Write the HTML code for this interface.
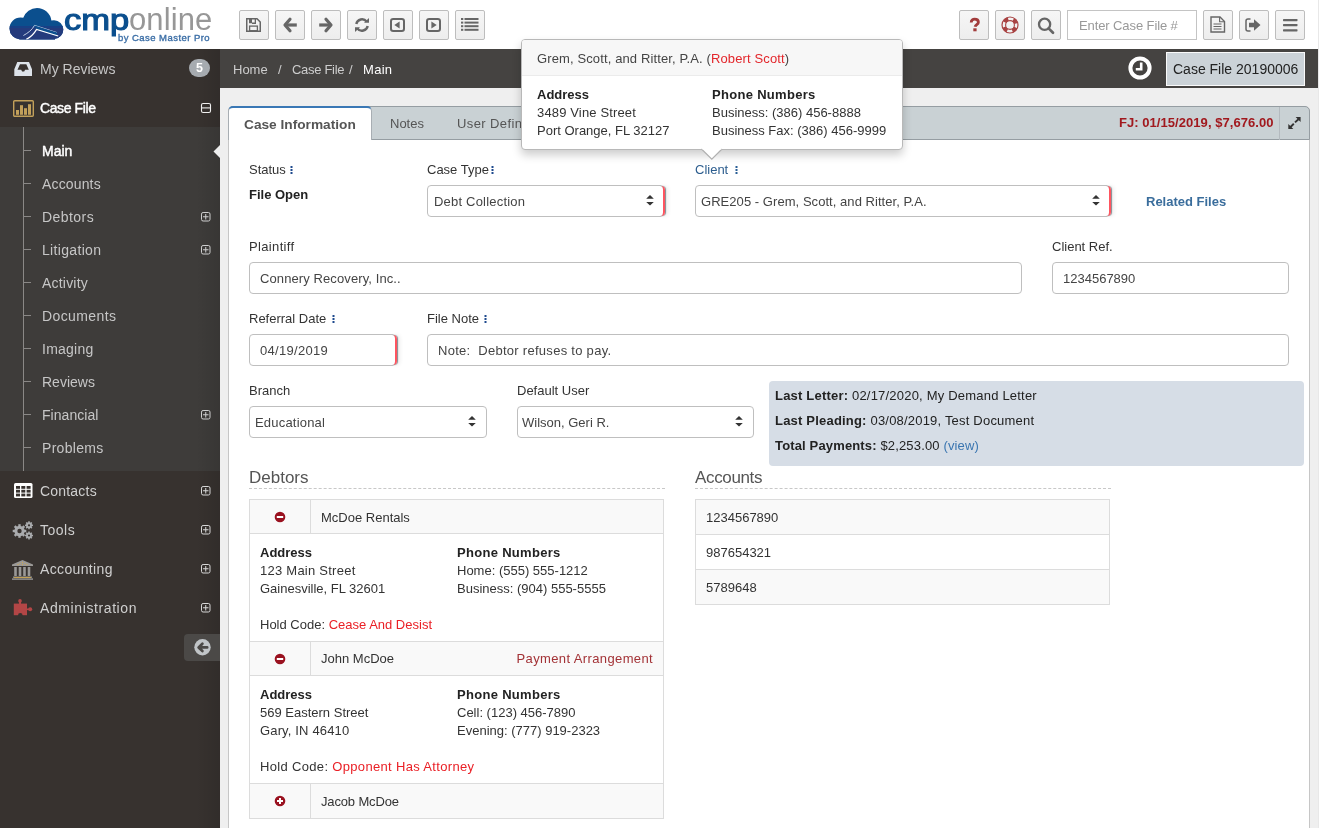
<!DOCTYPE html>
<html><head><meta charset="utf-8">
<style>
*{box-sizing:border-box;margin:0;padding:0}
html,body{width:1319px;height:828px;overflow:hidden;background:#fff;font-family:"Liberation Sans",sans-serif;font-size:13px;color:#333}
body{will-change:transform}
.a{position:absolute}
svg.a{overflow:visible}
.t{position:absolute;white-space:nowrap;line-height:18px}
.tb{position:absolute;top:10px;width:30px;height:30px;border:1px solid #bdbdbd;border-radius:2px;background:linear-gradient(#f6f6f6,#ededed)}
.s14{font-size:14px}
.sub{color:#c6c6c6;font-size:14px}
.inp{position:absolute;height:32px;border:1px solid #bfbfbf;border-radius:4px;background:#fff}
.rq{position:absolute;width:6px;height:30px;border-right:2.2px solid #ff5560;border-radius:0 4px 4px 0;box-shadow:1px 0 1px rgba(40,55,65,0.55),3px 0 4px rgba(0,0,0,0.07)}
.lbl{color:#333}
.b{font-weight:bold}
.tick{position:absolute;left:23px;width:8px;height:1px;background:#8a8886}
</style></head><body>

<!-- ===== HEADER ===== -->
<div class="a" style="left:1318px;top:0;width:1px;height:828px;background:#e8e8e8"></div>

<!-- logo -->
<svg class="a" style="left:0;top:0" width="70" height="48" viewBox="0 0 70 48">
  <defs><clipPath id="cl">
    <circle cx="20.5" cy="28.5" r="11"/>
    <circle cx="37" cy="22.5" r="14.5"/>
    <circle cx="54" cy="29.5" r="9.3"/>
    <rect x="20" y="26" width="35" height="13.6"/>
  </clipPath></defs>
  <g clip-path="url(#cl)">
    <rect x="0" y="0" width="70" height="48" fill="#0b4f8e"/>
    <rect x="0" y="27.5" width="70" height="20" fill="#243b7d"/>
    <rect x="0" y="26" width="70" height="1.5" fill="#183f86"/>
    <path d="M23.4,35.5 C28,33 32,30 34.5,25.4 L57,32.6" fill="none" stroke="#d4e0ee" stroke-width="0.9"/>
    <path d="M34.5,25.4 L57,32.6 L57,36 L36.6,29.4 Z" fill="#0b4f8e"/>
    <path d="M26.3,39.4 C31,37 34.5,33 36.6,29.4 L58.2,36" fill="none" stroke="#fff" stroke-width="1.2"/>
  </g>
</svg>
<div class="a" style="left:64px;top:4.5px;font-size:29px;line-height:31px;color:#0b4f8e;-webkit-text-stroke:1.1px #0b4f8e;transform:scaleX(1.19);transform-origin:0 0">cmp</div>
<div class="a" style="left:129px;top:4px;font-size:31px;line-height:31px;color:#979797;letter-spacing:0.1px">online</div>
<div class="a" style="left:118px;top:32.5px;font-size:9.5px;line-height:9px;color:#3b6ea6;-webkit-text-stroke:0.35px #3b6ea6;letter-spacing:0.45px">by Case Master Pro</div>

<!-- toolbar left -->
<div class="tb" style="left:239px"></div>
<div class="tb" style="left:275px"></div>
<div class="tb" style="left:311px"></div>
<div class="tb" style="left:347px"></div>
<div class="tb" style="left:383px"></div>
<div class="tb" style="left:419px"></div>
<div class="tb" style="left:455px"></div>
<!-- save -->
<svg class="a" style="left:246px;top:18px" width="15" height="14" viewBox="0 0 15 14">
  <path d="M0.75,0.75 H11 L14.25,4 V13.25 H0.75 Z" fill="none" stroke="#666" stroke-width="1.5"/>
  <rect x="3" y="0.75" width="3" height="4.5" fill="#666"/>
  <path d="M6,5.25 H9.35 V0.75" fill="none" stroke="#666" stroke-width="1.3"/>
  <rect x="3.6" y="8.1" width="7.8" height="4.6" fill="none" stroke="#666" stroke-width="1.3"/>
</svg>
<!-- arrow left -->
<svg class="a" style="left:283px;top:17px" width="14" height="16" viewBox="0 0 14 16">
  <polyline points="7,2.2 2,8 7,13.8" fill="none" stroke="#666" stroke-width="3.2" stroke-linecap="round" stroke-linejoin="round"/>
  <line x1="2.5" y1="8" x2="13.8" y2="8" stroke="#666" stroke-width="3.2"/>
</svg>
<!-- arrow right -->
<svg class="a" style="left:319px;top:17px" width="14" height="16" viewBox="0 0 14 16">
  <polyline points="7,2.2 12,8 7,13.8" fill="none" stroke="#666" stroke-width="3.2" stroke-linecap="round" stroke-linejoin="round"/>
  <line x1="0.2" y1="8" x2="11.5" y2="8" stroke="#666" stroke-width="3.2"/>
</svg>
<!-- refresh -->
<svg class="a" style="left:354px;top:18px" width="16" height="14" viewBox="0 0 16 14">
  <path d="M2.3,6 A5.8,5.8 0 0 1 12.6,3.6" fill="none" stroke="#666" stroke-width="2.4"/>
  <path d="M10,4.8 L15,4.8 L15,0 Z" fill="#666"/>
  <path d="M13.7,8 A5.8,5.8 0 0 1 3.4,10.4" fill="none" stroke="#666" stroke-width="2.4"/>
  <path d="M6,9.2 L1,9.2 L1,14 Z" fill="#666"/>
</svg>
<!-- step back -->
<svg class="a" style="left:390px;top:18px" width="15" height="14" viewBox="0 0 15 14">
  <rect x="1" y="1" width="13" height="12" rx="2.2" fill="none" stroke="#666" stroke-width="2"/>
  <path d="M4.3,7 L9.6,3.4 V10.6 Z" fill="#666"/>
</svg>
<!-- step fwd -->
<svg class="a" style="left:426px;top:18px" width="15" height="14" viewBox="0 0 15 14">
  <rect x="1" y="1" width="13" height="12" rx="2.2" fill="none" stroke="#666" stroke-width="2"/>
  <path d="M10.7,7 L5.4,3.4 V10.6 Z" fill="#666"/>
</svg>
<!-- list -->
<svg class="a" style="left:461px;top:18px" width="18" height="13" viewBox="0 0 18 13">
  <g fill="#666">
  <rect x="0" y="0" width="2.3" height="2"/><rect x="3.5" y="0" width="14" height="2"/>
  <rect x="0" y="3.6" width="2.3" height="2"/><rect x="3.5" y="3.6" width="14" height="2"/>
  <rect x="0" y="7.2" width="2.3" height="2"/><rect x="3.5" y="7.2" width="14" height="2"/>
  <rect x="0" y="10.8" width="2.3" height="2"/><rect x="3.5" y="10.8" width="14" height="2"/>
  </g>
</svg>

<!-- toolbar right -->
<div class="tb" style="left:959px"></div>
<div class="tb" style="left:995px"></div>
<div class="tb" style="left:1031px"></div>
<div class="a" style="left:1067px;top:10px;width:130px;height:30px;border:1px solid #c4c4c4;background:#fff"></div>
<div class="t" style="left:1079px;top:17px;color:#999;letter-spacing:-0.1px">Enter Case File #</div>
<div class="tb" style="left:1203px"></div>
<div class="tb" style="left:1239px"></div>
<div class="tb" style="left:1275px"></div>
<!-- ? -->
<svg class="a" style="left:969px;top:18px" width="12" height="14" viewBox="0 0 12 14">
  <path d="M2.2,4.6 C2.2,1.6 4,1.2 5.6,1.2 C7.8,1.2 9.4,2.4 9.4,4.2 C9.4,6.6 6.5,6.6 6.1,8.8" fill="none" stroke="#a23c3c" stroke-width="2.8"/>
  <rect x="4.3" y="10.3" width="3.3" height="3" fill="#a23c3c"/>
</svg>
<!-- lifebuoy -->
<svg class="a" style="left:1001px;top:16px" width="18" height="18" viewBox="0 0 18 18">
  <circle cx="9" cy="9" r="6.2" fill="none" stroke="#a84242" stroke-width="3.6" stroke-dasharray="4.5 5.24" stroke-dashoffset="-2.62"/>
  <circle cx="9" cy="9" r="8" fill="none" stroke="#a84242" stroke-width="1.2"/>
  <circle cx="9" cy="9" r="4.4" fill="none" stroke="#a84242" stroke-width="1.1"/>
</svg>
<!-- search -->
<svg class="a" style="left:1037px;top:17px" width="18" height="18" viewBox="0 0 18 18">
  <circle cx="7.6" cy="7.3" r="5.6" fill="none" stroke="#666" stroke-width="2.3"/>
  <line x1="11.6" y1="11.4" x2="16" y2="15.8" stroke="#666" stroke-width="2.7" stroke-linecap="round"/>
</svg>
<!-- doc -->
<svg class="a" style="left:1210px;top:16px" width="16" height="17" viewBox="0 0 16 17">
  <path d="M1,1 H10 L14.5,5.5 V16 H1 Z" fill="none" stroke="#666" stroke-width="1.4"/>
  <path d="M9.6,1 V5.8 H14.5" fill="none" stroke="#666" stroke-width="1.1"/>
  <g stroke="#666" stroke-width="1"><line x1="3.5" y1="8" x2="11.5" y2="8"/><line x1="3.5" y1="10.5" x2="11.5" y2="10.5"/><line x1="3.5" y1="13" x2="11.5" y2="13"/></g>
</svg>
<!-- sign out -->
<svg class="a" style="left:1245px;top:18px" width="17" height="14" viewBox="0 0 17 14">
  <path d="M5.5,1 H3 Q1,1 1,3 V11 Q1,13 3,13 H5.5" fill="none" stroke="#666" stroke-width="1.5"/>
  <path d="M4,4.8 H9 V1.2 L15.5,7 L9,12.8 V9.2 H4 Z" fill="#666"/>
</svg>
<!-- hamburger -->
<svg class="a" style="left:1283px;top:19px" width="15" height="13" viewBox="0 0 15 13">
  <g fill="#666"><rect x="0" y="0" width="14.5" height="2.2" rx="0.6"/><rect x="0" y="5" width="14.5" height="2.2" rx="0.6"/><rect x="0" y="10.2" width="14.5" height="2.2" rx="0.6"/></g>
</svg>

<!-- ===== SIDEBAR ===== -->
<div class="a" style="left:0;top:49px;width:220px;height:779px;background:#37322f"></div>
<div class="a" style="left:0;top:127px;width:220px;height:344px;background:#3e3c3a"></div>
<div class="a" style="left:196px;top:49px;width:24px;height:779px;background:linear-gradient(90deg,rgba(0,0,0,0),rgba(0,0,0,0.10))"></div>

<!-- My Reviews -->
<svg class="a" style="left:14px;top:62px" width="18" height="14" viewBox="0 0 18 14">
  <path d="M3.3,0 H15 L18,7.3 V14 H0.3 V7.3 Z M6,2.3 L3.5,7.7 H7.2 L8.1,9.6 H10.2 L11.1,7.7 H14.8 L12.3,2.3 Z" fill="#dde3ea" fill-rule="evenodd"/>
</svg>
<div class="t sub" style="left:40px;top:60px;color:#c6c6c6">My Reviews</div>
<div class="a" style="left:189px;top:59px;width:21px;height:18px;border-radius:9px;background:#a6abb0"></div>
<div class="a" style="left:189px;top:59px;width:21px;height:18px;font-size:12.5px;line-height:18px;text-align:center;font-weight:bold;color:#fff">5</div>

<!-- Case File -->
<svg class="a" style="left:13px;top:100px" width="21" height="17" viewBox="0 0 21 17">
  <rect x="0.7" y="0.7" width="19.6" height="15.6" rx="1" fill="none" stroke="#c2a05a" stroke-width="1.4"/>
  <g fill="#c2a05a"><rect x="3" y="10" width="3" height="4.8"/><rect x="7" y="5.2" width="3" height="9.6"/><rect x="11" y="8.2" width="3" height="6.6"/><rect x="15" y="4.2" width="3" height="10.6"/></g>
</svg>
<div class="t" style="left:40px;top:99px;font-size:14px;color:#fff;-webkit-text-stroke:0.45px #fff;letter-spacing:-0.4px">Case File</div>
<svg class="a" style="left:201px;top:103px" width="10" height="10" viewBox="0 0 10 10">
  <rect x="0.5" y="0.5" width="9" height="9" rx="1.6" fill="none" stroke="#f0f0f0" stroke-width="1.1"/>
  <line x1="0.5" y1="4.9" x2="9.5" y2="4.9" stroke="#f0f0f0" stroke-width="1.1"/>
</svg>

<!-- submenu -->
<div class="a" style="left:23px;top:127px;width:1px;height:344px;background:#8a8886"></div>
<div class="tick" style="top:150px"></div>
<div class="tick" style="top:183px"></div>
<div class="tick" style="top:216px"></div>
<div class="tick" style="top:249px"></div>
<div class="tick" style="top:282px"></div>
<div class="tick" style="top:315px"></div>
<div class="tick" style="top:348px"></div>
<div class="tick" style="top:381px"></div>
<div class="tick" style="top:414px"></div>
<div class="tick" style="top:447px"></div>
<div class="t" style="left:42px;top:142px;font-size:14px;color:#fff;-webkit-text-stroke:0.45px #fff;letter-spacing:0px">Main</div>
<div class="t sub" style="left:42px;top:175px;letter-spacing:0.15px">Accounts</div>
<div class="t sub" style="left:42px;top:208px;letter-spacing:0.45px">Debtors</div>
<div class="t sub" style="left:42px;top:241px;letter-spacing:0.33px">Litigation</div>
<div class="t sub" style="left:42px;top:274px;letter-spacing:0.2px">Activity</div>
<div class="t sub" style="left:42px;top:307px;letter-spacing:0.4px">Documents</div>
<div class="t sub" style="left:42px;top:340px;letter-spacing:0.25px">Imaging</div>
<div class="t sub" style="left:42px;top:373px">Reviews</div>
<div class="t sub" style="left:42px;top:406px;letter-spacing:0.05px">Financial</div>
<div class="t sub" style="left:42px;top:439px;letter-spacing:0.3px">Problems</div>
<!-- active arrow -->
<svg class="a" style="left:213px;top:145px" width="7" height="13" viewBox="0 0 7 13"><path d="M7,0 L0.5,6.5 L7,13 Z" fill="#eeeeee"/></svg>

<!-- plus icons -->
<svg class="a" style="left:201px;top:212px" width="10" height="10" viewBox="0 0 10 10"><rect x="0.5" y="0.5" width="8.5" height="8.5" rx="1.6" fill="none" stroke="#cfcfcf" stroke-width="1"/><path d="M4.75,2 V7.5 M2,4.75 H7.5" stroke="#cfcfcf" stroke-width="1"/></svg>
<svg class="a" style="left:201px;top:245px" width="10" height="10" viewBox="0 0 10 10"><rect x="0.5" y="0.5" width="8.5" height="8.5" rx="1.6" fill="none" stroke="#cfcfcf" stroke-width="1"/><path d="M4.75,2 V7.5 M2,4.75 H7.5" stroke="#cfcfcf" stroke-width="1"/></svg>
<svg class="a" style="left:201px;top:410px" width="10" height="10" viewBox="0 0 10 10"><rect x="0.5" y="0.5" width="8.5" height="8.5" rx="1.6" fill="none" stroke="#cfcfcf" stroke-width="1"/><path d="M4.75,2 V7.5 M2,4.75 H7.5" stroke="#cfcfcf" stroke-width="1"/></svg>
<svg class="a" style="left:201px;top:486px" width="10" height="10" viewBox="0 0 10 10"><rect x="0.5" y="0.5" width="8.5" height="8.5" rx="1.6" fill="none" stroke="#d8d8d8" stroke-width="1"/><path d="M4.75,2 V7.5 M2,4.75 H7.5" stroke="#d8d8d8" stroke-width="1"/></svg>
<svg class="a" style="left:201px;top:525px" width="10" height="10" viewBox="0 0 10 10"><rect x="0.5" y="0.5" width="8.5" height="8.5" rx="1.6" fill="none" stroke="#d8d8d8" stroke-width="1"/><path d="M4.75,2 V7.5 M2,4.75 H7.5" stroke="#d8d8d8" stroke-width="1"/></svg>
<svg class="a" style="left:201px;top:564px" width="10" height="10" viewBox="0 0 10 10"><rect x="0.5" y="0.5" width="8.5" height="8.5" rx="1.6" fill="none" stroke="#d8d8d8" stroke-width="1"/><path d="M4.75,2 V7.5 M2,4.75 H7.5" stroke="#d8d8d8" stroke-width="1"/></svg>
<svg class="a" style="left:201px;top:603px" width="10" height="10" viewBox="0 0 10 10"><rect x="0.5" y="0.5" width="8.5" height="8.5" rx="1.6" fill="none" stroke="#d8d8d8" stroke-width="1"/><path d="M4.75,2 V7.5 M2,4.75 H7.5" stroke="#d8d8d8" stroke-width="1"/></svg>

<!-- Contacts -->
<svg class="a" style="left:14px;top:483px" width="19" height="15" viewBox="0 0 19 15">
  <rect x="0" y="0" width="18.5" height="15" rx="1.5" fill="#fff"/>
  <g fill="#37322f">
  <rect x="2" y="3" width="4" height="2.8"/><rect x="7.3" y="3" width="4" height="2.8"/><rect x="12.6" y="3" width="4" height="2.8"/>
  <rect x="2" y="6.8" width="4" height="2.8"/><rect x="7.3" y="6.8" width="4" height="2.8"/><rect x="12.6" y="6.8" width="4" height="2.8"/>
  <rect x="2" y="10.6" width="4" height="2.8"/><rect x="7.3" y="10.6" width="4" height="2.8"/><rect x="12.6" y="10.6" width="4" height="2.8"/>
  </g>
</svg>
<div class="t sub" style="left:40px;top:482px;color:#cfcfcf;letter-spacing:0.2px">Contacts</div>
<!-- Tools gears -->
<svg class="a" style="left:12px;top:521px" width="22" height="19" viewBox="0 0 22 19">
  <g fill="#a9abad">
    <circle cx="7.5" cy="10" r="5.2"/>
    <g stroke="#a9abad" stroke-width="2.4">
      <line x1="7.5" y1="3.2" x2="7.5" y2="16.8"/><line x1="0.7" y1="10" x2="14.3" y2="10"/>
      <line x1="2.7" y1="5.2" x2="12.3" y2="14.8"/><line x1="2.7" y1="14.8" x2="12.3" y2="5.2"/>
    </g>
    <circle cx="17" cy="4.3" r="3"/>
    <g stroke="#a9abad" stroke-width="1.5"><line x1="17" y1="0.3" x2="17" y2="8.3"/><line x1="13" y1="4.3" x2="21" y2="4.3"/><line x1="14.2" y1="1.5" x2="19.8" y2="7.1"/><line x1="14.2" y1="7.1" x2="19.8" y2="1.5"/></g>
    <circle cx="17" cy="14.5" r="3"/>
    <g stroke="#a9abad" stroke-width="1.5"><line x1="17" y1="10.5" x2="17" y2="18.5"/><line x1="13" y1="14.5" x2="21" y2="14.5"/><line x1="14.2" y1="11.7" x2="19.8" y2="17.3"/><line x1="14.2" y1="17.3" x2="19.8" y2="11.7"/></g>
  </g>
  <circle cx="7.5" cy="10" r="2.2" fill="#37322f"/>
  <circle cx="17" cy="4.3" r="1.1" fill="#37322f"/>
  <circle cx="17" cy="14.5" r="1.1" fill="#37322f"/>
</svg>
<div class="t sub" style="left:40px;top:521px;color:#cfcfcf;letter-spacing:0.5px">Tools</div>
<!-- Accounting bank -->
<svg class="a" style="left:12px;top:560px" width="22" height="20" viewBox="0 0 22 20">
  <path d="M10.5,0 L21,4.5 V6 H0 V4.5 Z" fill="#9a9896"/>
  <g fill="#d4aa4a"><circle cx="8" cy="3.5" r="0.6"/><circle cx="10.5" cy="2.5" r="0.6"/><circle cx="13" cy="3.5" r="0.6"/><circle cx="6" cy="4.6" r="0.6"/><circle cx="15" cy="4.6" r="0.6"/><circle cx="10.5" cy="4.6" r="0.6"/></g>
  <g fill="#9a9896"><rect x="2.2" y="7" width="2.6" height="9"/><rect x="6.7" y="7" width="2.6" height="9"/><rect x="11.2" y="7" width="2.6" height="9"/><rect x="15.7" y="7" width="2.6" height="9"/><rect x="1" y="16.5" width="19" height="1.3"/><rect x="0" y="18.4" width="21" height="1.4"/></g>
  <g fill="#d4aa4a"><rect x="2" y="17" width="17" height="0.8"/></g>
</svg>
<div class="t sub" style="left:40px;top:560px;color:#cfcfcf;letter-spacing:0.35px">Accounting</div>
<!-- Administration puzzle -->
<svg class="a" style="left:13px;top:599px" width="20" height="17" viewBox="0 0 20 17">
  <g fill="#b34646">
    <rect x="0.8" y="4.6" width="13.2" height="11.6"/>
    <circle cx="7" cy="1.9" r="1.8"/><rect x="6" y="2" width="2" height="3"/>
    <circle cx="17.2" cy="10.3" r="2"/><rect x="13.5" y="9.5" width="2.5" height="1.6"/>
  </g>
  <circle cx="7.3" cy="16.4" r="2.3" fill="#37322f"/>
</svg>
<div class="t sub" style="left:40px;top:599px;color:#cfcfcf;letter-spacing:0.6px">Administration</div>

<!-- collapse button -->
<div class="a" style="left:184px;top:634px;width:36px;height:27px;background:#4b4947;border-radius:4px 0 0 4px"></div>
<svg class="a" style="left:193.5px;top:638.5px" width="17" height="17" viewBox="0 0 17 17">
  <circle cx="8.5" cy="8.3" r="8.2" fill="#c1c5c8"/>
  <path d="M8.4,4.8 L4.6,8.4 L8.4,12 M5.2,8.4 H13.2" fill="none" stroke="#4b4947" stroke-width="2.7" stroke-linecap="round" stroke-linejoin="round"/>
</svg>

<!-- ===== TOP BAR ===== -->
<div class="a" style="left:220px;top:49px;width:1098px;height:39px;background:#454341"></div>
<div class="t" style="left:233px;top:60.5px;color:#cdcdcd">Home</div>
<div class="t" style="left:278px;top:60.5px;color:#cdcdcd">/</div>
<div class="t" style="left:292px;top:60.5px;color:#cdcdcd;letter-spacing:-0.3px">Case File</div>
<div class="t" style="left:349px;top:60.5px;color:#cdcdcd">/</div>
<div class="t" style="left:363px;top:60.5px;color:#fff;letter-spacing:0.3px">Main</div>
<svg class="a" style="left:1128px;top:56px" width="24" height="24" viewBox="0 0 24 24">
  <circle cx="12" cy="12" r="9.6" fill="none" stroke="#fff" stroke-width="4"/>
  <path d="M13.2,6.6 V13.3 H7.8" fill="none" stroke="#fff" stroke-width="2.6"/>
</svg>
<div class="a" style="left:1166px;top:52px;width:139px;height:34px;background:#cbd2d7;border:1.5px solid #fafafa"></div>
<div class="t" style="left:1173px;top:60px;font-size:14px;color:#222">Case File 20190006</div>

<!-- ===== CONTENT ===== -->
<div class="a" style="left:220px;top:88px;width:1098px;height:740px;background:#efefef"></div>
<div class="a" style="left:228px;top:106px;width:1082px;height:740px;background:#fff;border:1px solid #c6c6c6;border-radius:5px 5px 0 0"></div>
<div class="a" style="left:228px;top:106px;width:1082px;height:34px;background:#c9d1d4;border:1px solid #959da2;border-radius:5px 5px 0 0"></div>
<!-- active tab -->
<div class="a" style="left:228px;top:106px;width:144px;height:34px;background:#fff;border-top:2px solid #3a78b5;border-left:1px solid #a8aeb3;border-right:1px solid #a8aeb3;border-radius:5px 5px 0 0"></div>
<div class="t b" style="left:244px;top:116px;font-size:13.7px;color:#555">Case Information</div>
<div class="t" style="left:390px;top:115px;color:#555">Notes</div>
<div class="t" style="left:457px;top:115px;color:#555;letter-spacing:0.4px">User Defined</div>
<div class="t b" style="left:1119px;top:113.5px;color:#a1191e;letter-spacing:0.05px">FJ: 01/15/2019, $7,676.00</div>
<div class="a" style="left:1279px;top:107px;width:1px;height:33px;background:#b4babf"></div>
<svg class="a" style="left:1287px;top:116px" width="15" height="15" viewBox="0 0 15 15">
  <path d="M8.6,1.1 H13.6 V6.1 Z M1.3,8.1 V13.1 H6.3 Z" fill="#333"/>
  <path d="M12,2.7 L8,6.4 M3,11.5 L6.8,7.8" stroke="#333" stroke-width="1.9"/>
</svg>

<!-- row 1 -->
<div class="t lbl" style="left:249px;top:161px">Status</div>
<svg class="a" style="left:290px;top:165px" width="3" height="10" viewBox="0 0 3 10"><g fill="#1f4a8e"><rect x="0.5" y="1" width="2" height="2"/><rect x="0.5" y="4" width="2" height="2"/><rect x="0.5" y="7" width="2" height="2"/></g></svg>
<div class="t b" style="left:249px;top:186px;color:#222">File Open</div>
<div class="t lbl" style="left:427px;top:161px">Case Type</div>
<svg class="a" style="left:491px;top:165px" width="3" height="10" viewBox="0 0 3 10"><g fill="#1f4a8e"><rect x="0.5" y="1" width="2" height="2"/><rect x="0.5" y="4" width="2" height="2"/><rect x="0.5" y="7" width="2" height="2"/></g></svg>
<div class="inp" style="left:427px;top:185px;width:237px;height:32px"></div><div class="rq" style="left:659px;top:186px"></div>
<div class="t" style="left:434px;top:193px;color:#444;letter-spacing:0.2px">Debt Collection</div>
<svg class="a" style="left:646px;top:195px" width="8" height="11" viewBox="0 0 8 11"><path d="M4,0 L7.8,3.8 H0.2 Z M4,10.6 L7.8,6.9 H0.2 Z" fill="#333"/></svg>
<div class="t" style="left:695px;top:161px;color:#2c5d8e">Client</div>
<svg class="a" style="left:735px;top:165px" width="3" height="10" viewBox="0 0 3 10"><g fill="#2a5f96"><rect x="0.5" y="1" width="2" height="2"/><rect x="0.5" y="4" width="2" height="2"/><rect x="0.5" y="7" width="2" height="2"/></g></svg>
<div class="inp" style="left:695px;top:185px;width:415px;height:32px"></div><div class="rq" style="left:1105px;top:186px"></div>
<div class="t" style="left:701px;top:193px;color:#444;letter-spacing:0.05px">GRE205 - Grem, Scott, and Ritter, P.A.</div>
<svg class="a" style="left:1092px;top:195px" width="8" height="11" viewBox="0 0 8 11"><path d="M4,0 L7.8,3.8 H0.2 Z M4,10.6 L7.8,6.9 H0.2 Z" fill="#333"/></svg>
<div class="t b" style="left:1146px;top:193px;color:#3a6d9c">Related Files</div>

<!-- row 2 -->
<div class="t lbl" style="left:249px;top:238px;letter-spacing:0.35px">Plaintiff</div>
<div class="inp" style="left:249px;top:262px;width:773px"></div>
<div class="t" style="left:260px;top:270px;color:#444;letter-spacing:0.1px">Connery Recovery, Inc..</div>
<div class="t lbl" style="left:1052px;top:238px">Client Ref.</div>
<div class="inp" style="left:1052px;top:262px;width:237px"></div>
<div class="t" style="left:1063px;top:270px;color:#444">1234567890</div>

<!-- row 3 -->
<div class="t lbl" style="left:249px;top:310px">Referral Date</div>
<svg class="a" style="left:332px;top:314px" width="3" height="10" viewBox="0 0 3 10"><g fill="#1f4a8e"><rect x="0.5" y="1" width="2" height="2"/><rect x="0.5" y="4" width="2" height="2"/><rect x="0.5" y="7" width="2" height="2"/></g></svg>
<div class="inp" style="left:249px;top:334px;width:147px"></div><div class="rq" style="left:391px;top:335px"></div>
<div class="t" style="left:260px;top:341.5px;color:#444;letter-spacing:0.3px">04/19/2019</div>
<div class="t lbl" style="left:427px;top:310px">File Note</div>
<svg class="a" style="left:484px;top:314px" width="3" height="10" viewBox="0 0 3 10"><g fill="#1f4a8e"><rect x="0.5" y="1" width="2" height="2"/><rect x="0.5" y="4" width="2" height="2"/><rect x="0.5" y="7" width="2" height="2"/></g></svg>
<div class="inp" style="left:427px;top:334px;width:862px"></div>
<div class="t" style="left:438px;top:341.5px;color:#444;letter-spacing:0.28px">Note:&nbsp; Debtor refuses to pay.</div>

<!-- row 4 -->
<div class="t lbl" style="left:249px;top:382px">Branch</div>
<div class="inp" style="left:249px;top:406px;width:238px"></div>
<div class="t" style="left:255px;top:414px;color:#444;letter-spacing:0.2px">Educational</div>
<svg class="a" style="left:468px;top:416px" width="8" height="11" viewBox="0 0 8 11"><path d="M4,0 L7.8,3.8 H0.2 Z M4,10.6 L7.8,6.9 H0.2 Z" fill="#333"/></svg>
<div class="t lbl" style="left:517px;top:382px">Default User</div>
<div class="inp" style="left:517px;top:406px;width:237px"></div>
<div class="t" style="left:522px;top:414px;color:#444">Wilson, Geri R.</div>
<svg class="a" style="left:735px;top:416px" width="8" height="11" viewBox="0 0 8 11"><path d="M4,0 L7.8,3.8 H0.2 Z M4,10.6 L7.8,6.9 H0.2 Z" fill="#333"/></svg>

<!-- info box -->
<div class="a" style="left:769px;top:381px;width:535px;height:85px;background:#d6dde6;border-radius:4px"></div>
<div class="t" style="left:775px;top:387px;color:#222;letter-spacing:0.2px"><b>Last Letter:</b> 02/17/2020, My Demand Letter</div>
<div class="t" style="left:775px;top:412px;color:#222;letter-spacing:0.2px"><b>Last Pleading:</b> 03/08/2019, Test Document</div>
<div class="t" style="left:775px;top:437px;color:#222;letter-spacing:0.15px"><b>Total Payments:</b> $2,253.00 <span style="color:#3a75b0">(view)</span></div>

<!-- Debtors -->
<div class="t" style="left:249px;top:468.5px;font-size:17px;color:#555">Debtors</div>
<div class="a" style="left:249px;top:488px;width:416px;height:0;border-top:1px dashed #c8c8c8"></div>
<div class="a" style="left:249px;top:499px;width:415px;height:320px;border:1px solid #dcdcdc;background:#fff"></div>
<div class="a" style="left:250px;top:500px;width:413px;height:34px;background:#f9f9f9;border-bottom:1px solid #dcdcdc"></div>
<div class="a" style="left:310px;top:500px;width:1px;height:34px;background:#dcdcdc"></div>
<svg class="a" style="left:274px;top:511px" width="12" height="12" viewBox="0 0 12 12"><circle cx="6" cy="6" r="5.3" fill="#9a1220"/><rect x="2.8" y="5" width="6.4" height="2" fill="#fff"/></svg>
<div class="t" style="left:321px;top:509px;color:#333">McDoe Rentals</div>

<div class="t b" style="left:260px;top:543.5px;color:#222">Address</div>
<div class="t" style="left:260px;top:561.5px;color:#333;letter-spacing:0.25px">123 Main Street</div>
<div class="t" style="left:260px;top:579.5px;color:#333">Gainesville, FL 32601</div>
<div class="t b" style="left:457px;top:543.5px;color:#222;letter-spacing:0.3px">Phone Numbers</div>
<div class="t" style="left:457px;top:561.5px;color:#333">Home: (555) 555-1212</div>
<div class="t" style="left:457px;top:579.5px;color:#333">Business: (904) 555-5555</div>
<div class="t" style="left:260px;top:616px;color:#333">Hold Code: <span style="color:#ea2026">Cease And Desist</span></div>

<div class="a" style="left:250px;top:641px;width:413px;height:35px;background:#f9f9f9;border-top:1px solid #dcdcdc;border-bottom:1px solid #dcdcdc"></div>
<div class="a" style="left:310px;top:642px;width:1px;height:33px;background:#dcdcdc"></div>
<svg class="a" style="left:274px;top:653px" width="12" height="12" viewBox="0 0 12 12"><circle cx="6" cy="6" r="5.3" fill="#9a1220"/><rect x="2.8" y="5" width="6.4" height="2" fill="#fff"/></svg>
<div class="t" style="left:321px;top:650px;color:#333">John McDoe</div>
<div class="t" style="left:516.5px;top:650px;color:#a33236;letter-spacing:0.38px">Payment Arrangement</div>

<div class="t b" style="left:260px;top:685.5px;color:#222">Address</div>
<div class="t" style="left:260px;top:703.5px;color:#333">569 Eastern Street</div>
<div class="t" style="left:260px;top:721.5px;color:#333;letter-spacing:0.15px">Gary, IN 46410</div>
<div class="t b" style="left:457px;top:685.5px;color:#222;letter-spacing:0.3px">Phone Numbers</div>
<div class="t" style="left:457px;top:703.5px;color:#333">Cell: (123) 456-7890</div>
<div class="t" style="left:457px;top:721.5px;color:#333">Evening: (777) 919-2323</div>
<div class="t" style="left:260px;top:758px;color:#333;letter-spacing:0.33px">Hold Code: <span style="color:#ea2026">Opponent Has Attorney</span></div>

<div class="a" style="left:250px;top:783px;width:413px;height:35px;background:#f9f9f9;border-top:1px solid #dcdcdc"></div>
<div class="a" style="left:310px;top:784px;width:1px;height:34px;background:#dcdcdc"></div>
<svg class="a" style="left:274px;top:795px" width="12" height="12" viewBox="0 0 12 12"><circle cx="6" cy="6" r="5.3" fill="#9a1220"/><path d="M3,6 H9 M6,3 V9" stroke="#fff" stroke-width="2"/></svg>
<div class="t" style="left:321px;top:792.5px;color:#333;letter-spacing:-0.15px">Jacob McDoe</div>

<!-- Accounts -->
<div class="t" style="left:695px;top:468.5px;font-size:17px;color:#555;letter-spacing:-0.35px">Accounts</div>
<div class="a" style="left:695px;top:488px;width:416px;height:0;border-top:1px dashed #c8c8c8"></div>
<div class="a" style="left:695px;top:499px;width:415px;height:106px;border:1px solid #dcdcdc;background:#fff"></div>
<div class="a" style="left:696px;top:500px;width:413px;height:34px;background:#f9f9f9"></div>
<div class="a" style="left:696px;top:534px;width:413px;height:1px;background:#dcdcdc"></div>
<div class="a" style="left:696px;top:569px;width:413px;height:1px;background:#dcdcdc"></div>
<div class="a" style="left:696px;top:570px;width:413px;height:34px;background:#f9f9f9"></div>
<div class="t" style="left:706px;top:509px;color:#333">1234567890</div>
<div class="t" style="left:706px;top:544px;color:#333">987654321</div>
<div class="t" style="left:706px;top:579px;color:#333">5789648</div>

<!-- ===== POPOVER ===== -->
<div class="a" style="left:521px;top:39px;width:382px;height:111px;background:#fff;border:1px solid #b8b8b8;border-radius:4px;box-shadow:0 5px 10px rgba(0,0,0,0.2)"></div>
<div class="a" style="left:522px;top:40px;width:380px;height:36px;background:#f7f7f7;border-bottom:1px solid #ebebeb;border-radius:3px 3px 0 0"></div>
<svg class="a" style="left:700px;top:148px" width="24" height="13" viewBox="0 0 24 13">
  <path d="M1.5,1 L11.8,11.2 L22,1" fill="#fff" stroke="#b0b0b0" stroke-width="1.2"/>
  <rect x="2.2" y="0" width="19.2" height="1.5" fill="#fff"/>
</svg>
<div class="t" style="left:537px;top:50px;color:#444;letter-spacing:0.12px">Grem, Scott, and Ritter, P.A. (<span style="color:#e3262b">Robert Scott</span>)</div>
<div class="t b" style="left:537px;top:86px;color:#222">Address</div>
<div class="t" style="left:537px;top:104px;color:#333;letter-spacing:0.15px">3489 Vine Street</div>
<div class="t" style="left:537px;top:122px;color:#333">Port Orange, FL 32127</div>
<div class="t b" style="left:712px;top:86px;color:#222;letter-spacing:0.3px">Phone Numbers</div>
<div class="t" style="left:712px;top:104px;color:#333">Business: (386) 456-8888</div>
<div class="t" style="left:712px;top:122px;color:#333">Business Fax: (386) 456-9999</div>

</body></html>
